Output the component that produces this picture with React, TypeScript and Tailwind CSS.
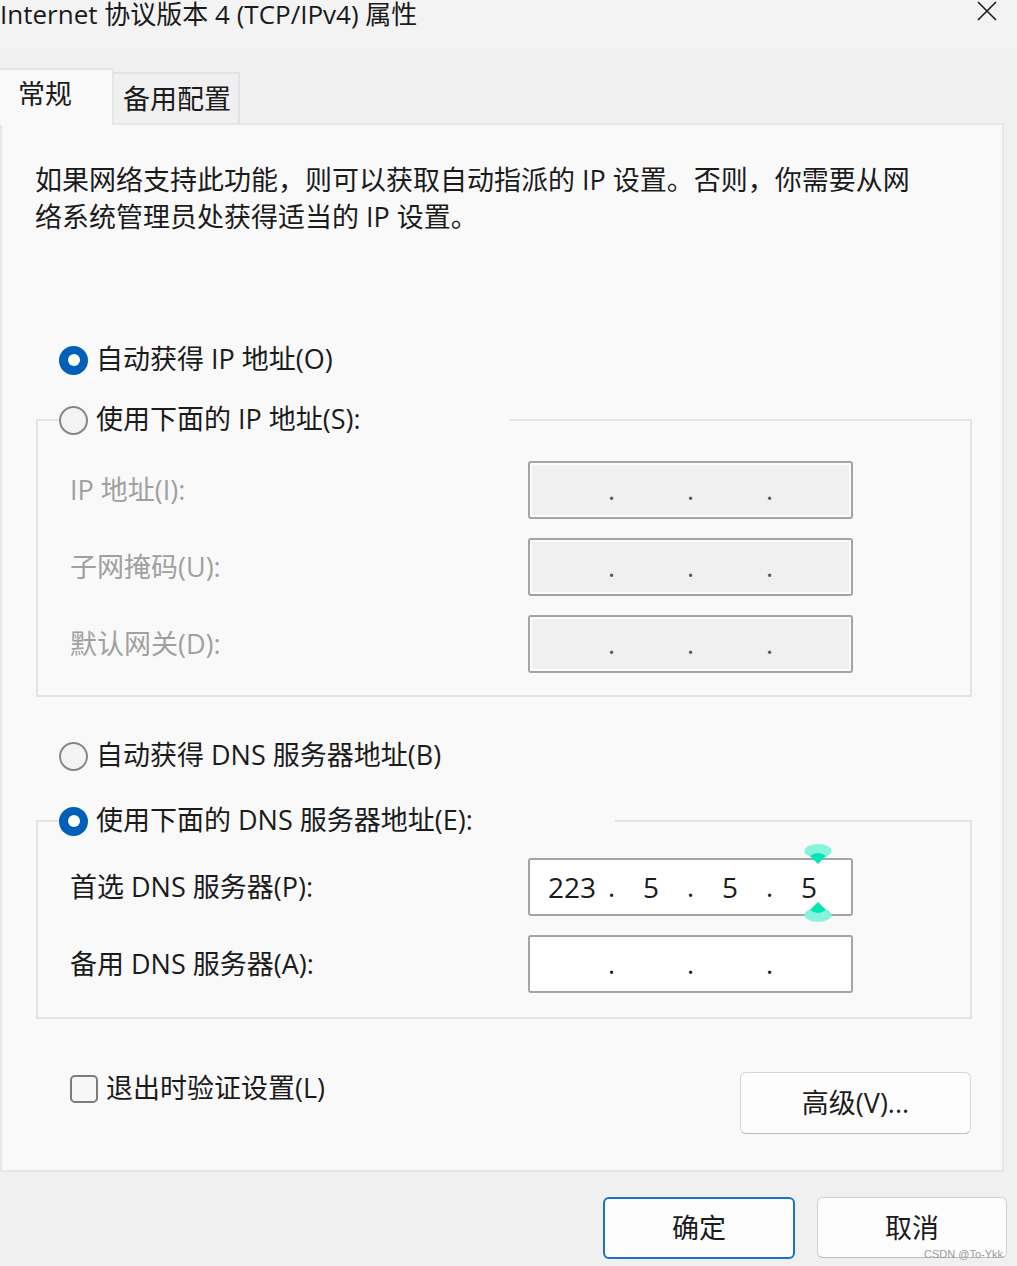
import { Fragment } from "react";

type RadioProps = { checked?: boolean; label: string };

const Radio = ({ checked, label }: RadioProps) => (
  <div className="flex items-center h-[36px] gap-[8px]">
    {checked ? (
      <span className="w-[29px] h-[29px] rounded-full bg-[#005fb8] flex items-center justify-center shrink-0">
        <span className="w-[12px] h-[12px] rounded-full bg-white" />
      </span>
    ) : (
      <span className="w-[29px] h-[29px] rounded-full border-2 border-[#878787] bg-[#f4f4f4] shrink-0" />
    )}
    <span className="whitespace-nowrap -mt-[3px]">{label}</span>
  </div>
);

interface IpBoxProps {
  parts?: string[];
  disabled?: boolean;
}

const IpBox = ({ parts, disabled }: IpBoxProps) => {
  const p = parts ?? ["", "", "", ""];
  return (
    <div
      className={
        disabled
          ? "flex items-center w-[325px] h-[58px] pl-[10px] border-2 border-[#a4a4a4] rounded-[3px] bg-[#f0f0f0] shadow-[inset_0_0_0_2px_#fbfbfb] text-[#555]"
          : "flex items-center w-[325px] h-[58px] pl-[10px] border-2 border-[#a4a4a4] rounded-[3px] bg-white text-[#1b1b1b]"
      }
    >
      {p.map((v, i) => (
        <Fragment key={i}>
          {i > 0 && <span className="w-[15px] text-center">.</span>}
          <span className="w-[64px] text-center text-[28px]">{v}</span>
        </Fragment>
      ))}
    </div>
  );
};

interface FieldRowProps {
  label: string;
  disabled?: boolean;
  parts?: string[];
  children?: React.ReactNode;
}

const FieldRow = ({ label, disabled, parts, children }: FieldRowProps) => (
  <div className="flex items-center h-[58px]">
    <span className={disabled ? "w-[490px] pl-[32px] whitespace-nowrap text-[#a0a0a0]" : "w-[490px] pl-[32px] whitespace-nowrap"}>
      {label}
    </span>
    <div className="relative">
      <IpBox parts={parts} disabled={disabled} />
      {children}
    </div>
  </div>
);

// teal touch selection handles around the caret
const Handles = () => (
  <svg className="absolute left-[276px] top-[-14px]" width="28" height="80" viewBox="0 0 28 80">
    <ellipse cx="14" cy="7" rx="13.5" ry="7" fill="#86f4dc" />
    <path d="M6 12 Q14 6 22 12 L14 20 Z" fill="#00e6b2" />
    <ellipse cx="14" cy="71" rx="13.5" ry="7" fill="#86f4dc" />
    <path d="M6 66 Q14 72 22 66 L14 58 Z" fill="#00e6b2" />
  </svg>
);

export default function App() {
  return (
    <div className="relative w-[1017px] h-[1266px] overflow-hidden bg-[#f0f0f0] text-[27px] leading-[36px] text-[#1b1b1b] font-['Open_Sans','Noto_Sans_CJK_SC',sans-serif]">
      {/* title bar */}
      <div className="flex justify-between items-start h-[48px] bg-[#f3f3f3]">
        <div className="text-[26px] leading-[26px] pt-[1px] whitespace-nowrap text-[#1a1a1a]">
          Internet 协议版本 4 (TCP/IPv4) 属性
        </div>
        <svg className="mt-[1px] mr-[20px]" width="20" height="20" viewBox="0 0 20 20">
          <path d="M1 1 L19 19 M19 1 L1 19" stroke="#1a1a1a" strokeWidth="1.6" />
        </svg>
      </div>

      {/* tabs */}
      <div className="flex items-end h-[75px]">
        <div className="relative z-10 -mb-[2px] w-[114px] h-[57px] pl-[18px] pt-[6px] bg-[#f9f9f9] border-t-2 border-r-2 border-[#e6e6e6]">
          常规
        </div>
        <div className="w-[126px] h-[51px] pl-[9px] pt-[7px] bg-[#f0f0f0] border-2 border-b-0 border-l-0 border-[#e2e2e2]">
          备用配置
        </div>
      </div>

      {/* panel */}
      <div className="w-[1004px] h-[1049px] border-2 border-[#e6e6e6] bg-[#f9f9f9] flex flex-col">
        <p className="mt-[36px] pl-[33px] leading-[37px] whitespace-nowrap">
          如果网络支持此功能，则可以获取自动指派的 IP 设置。否则，你需要从网
          <br />
          络系统管理员处获得适当的 IP 设置。
        </p>

        <div className="mt-[107px] ml-[57px]">
          <Radio checked label="自动获得 IP 地址(O)" />
        </div>

        <fieldset className="mt-[24px] ml-[34px] w-[936px] border-2 border-[#e3e3e3] pb-[22px]">
          <legend className="ml-[21px] w-[451px]">
            <Radio label="使用下面的 IP 地址(S):" />
          </legend>
          <div className="mt-[23px] flex flex-col gap-[19px]">
            <FieldRow label="IP 地址(I):" disabled />
            <FieldRow label="子网掩码(U):" disabled />
            <FieldRow label="默认网关(D):" disabled />
          </div>
        </fieldset>

        <div className="mt-[41px] ml-[57px]">
          <Radio label="自动获得 DNS 服务器地址(B)" />
        </div>

        <fieldset className="mt-[29px] ml-[34px] w-[936px] border-2 border-[#e3e3e3] pb-[24px]">
          <legend className="ml-[21px] w-[556px]">
            <Radio checked label="使用下面的 DNS 服务器地址(E):" />
          </legend>
          <div className="mt-[19px] flex flex-col gap-[19px]">
            <FieldRow label="首选 DNS 服务器(P):" parts={["223", "5", "5", "5"]}>
              <Handles />
            </FieldRow>
            <FieldRow label="备用 DNS 服务器(A):" />
          </div>
        </fieldset>

        <div className="mt-[53px] flex justify-between items-start pl-[68px] pr-[31px]">
          <label className="flex items-center gap-[8px]">
            <span className="w-[28px] h-[28px] rounded-[5px] border-2 border-[#7c7c7c] bg-[#f6f6f6]" />
            <span className="whitespace-nowrap -mt-[2px]">退出时验证设置(L)</span>
          </label>
          <button className="w-[231px] h-[62px] rounded-[6px] border border-[#d6d6d6] border-b-[#bdbdbd] bg-[#fdfdfd]">
            高级(V)...
          </button>
        </div>
      </div>

      {/* footer */}
      <div className="mt-[25px] flex justify-end gap-[22px] pr-[10px]">
        <button className="w-[192px] h-[62px] rounded-[6px] border-2 border-[#1a73c8] bg-[#fdfdfd]">确定</button>
        <button className="w-[190px] h-[61px] rounded-[6px] border border-[#d2d2d2] border-b-[#bdbdbd] bg-[#fdfdfd]">取消</button>
      </div>

      <div className="absolute right-[14px] bottom-[6px] text-[11px] leading-[12px] text-[#9a9a9a] font-['Liberation_Sans',sans-serif]">
        CSDN @To-Ykk
      </div>
    </div>
  );
}
